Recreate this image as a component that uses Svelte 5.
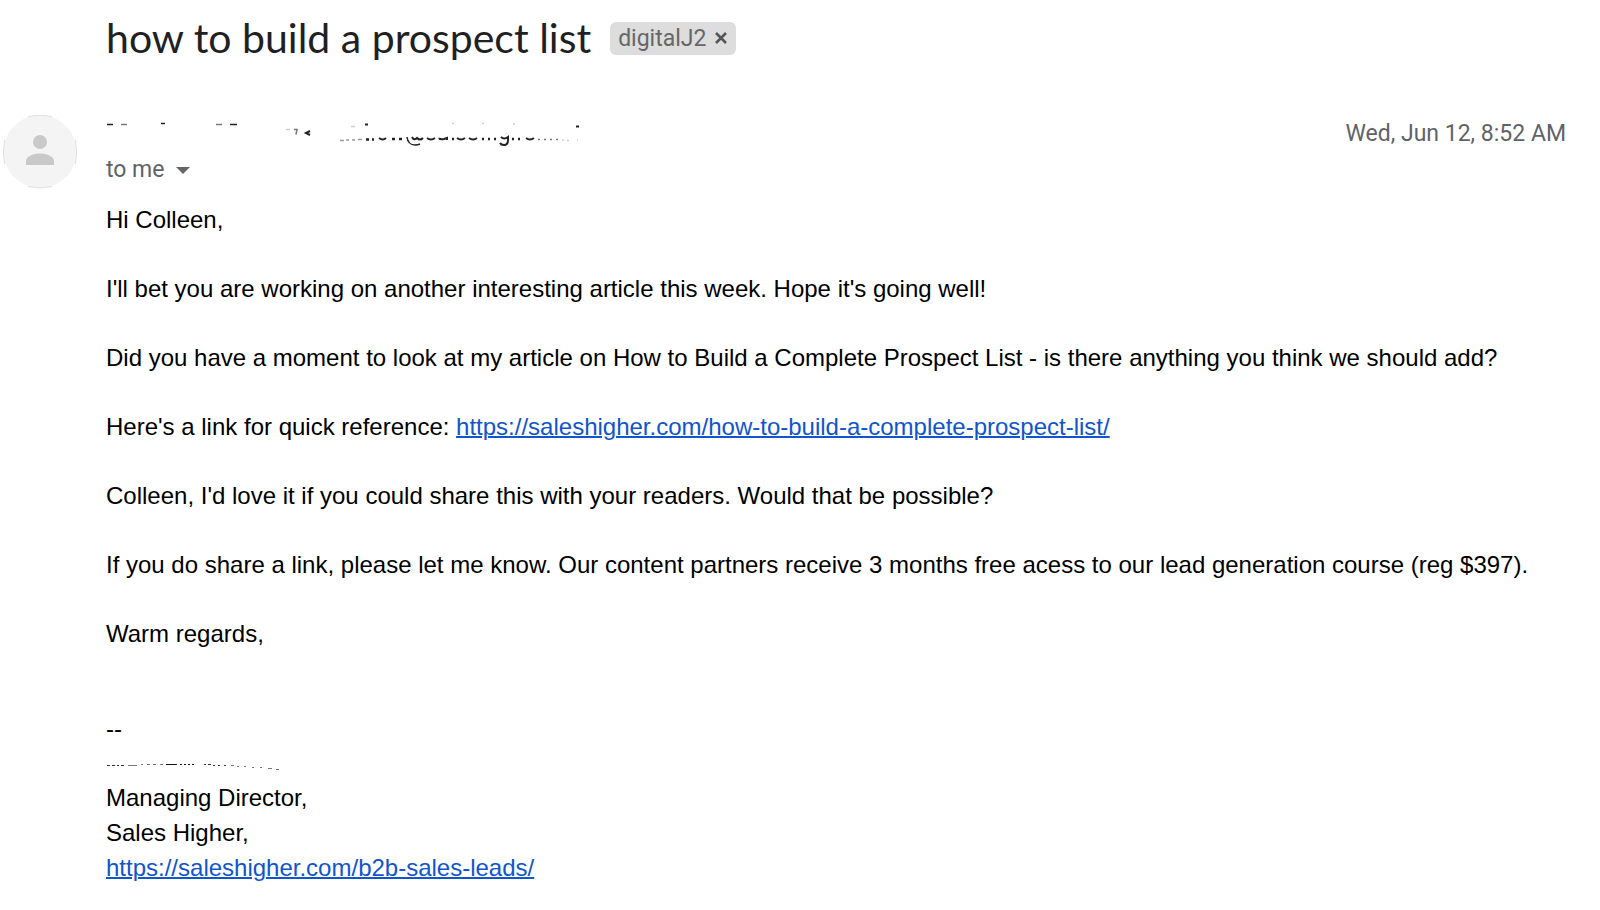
<script lang="ts">
  const articleUrl = 'https://saleshigher.com/how-to-build-a-complete-prospect-list/';
  const leadsUrl = 'https://saleshigher.com/b2b-sales-leads/';

  let labels = $state(['digitalJ2']);

  function removeLabel(name: string) {
    labels = labels.filter((label) => label !== name);
  }
</script>

<main class="thread">
  <header class="subject">
    <h1>how to build a prospect list</h1>
    {#each labels as label (label)}
      <span class="label">
        {label}
        <button type="button" aria-label="Remove label {label}" onclick={() => removeLabel(label)}>
          <svg viewBox="0 0 14 14" width="14" height="14" aria-hidden="true">
            <path d="M2 2L12 12M12 2L2 12" stroke="#555" stroke-width="2.600" />
          </svg>
        </button>
      </span>
    {/each}
  </header>

  <article class="message">
    <svg class="avatar" viewBox="0 0 74 74" width="74" height="74" aria-hidden="true">
      <circle cx="37" cy="36.500" r="36.500" fill="#f4f4f4" />
      <path
        d="M25 1.500Q37 -1.500 49 1.500M25 71.500Q37 74.500 49 71.500M1.500 25Q-.5 37 1.500 49M72.500 25Q74.500 37 72.500 49"
        fill="none"
        stroke="#e0e0e0"
      />
      <circle cx="37" cy="27" r="7" fill="#c9c9c9" />
      <path d="M23 50V46C23 41 31 38.500 37 38.500S51 41 51 46V50Z" fill="#c9c9c9" />
    </svg>

    <div class="content">
      <div class="meta">
        <!-- what is left of the rubbed-out sender -->
        <svg class="sender" viewBox="0 0 480 26" width="480" height="26" aria-hidden="true">
          <g fill="none" stroke="#222" stroke-width="1.500">
            <path d="M1 4.500h6M55 3.500h4M124 4.500h7" />
            <path d="M15 4.500h6M110 4.500h6" stroke="#777" />
            <path d="M180 9.500h4M245 6.500h4M346 3.500h2M376 3.500h2M407 4h2" stroke="#ccc" />
            <path d="M188 9.500h3l-1 5" stroke="#777" />
            <path d="M204 11l-4 2l4 2" stroke-width="2" />
            <path d="M259 4.500h3M470 6.500h3" stroke-width="2" />
            <path d="M234 20.500h4M240 20h3M246 20h3M252 19.500h4" stroke="#999" />
            <path d="M260 19.500h3M266 19.500h2M286 19h3M293 19h3M346 19h2M376 19h2M382 19h2M388 19h2M406 19h2M412 19h2" stroke-width="2.500" />
            <path d="M273 18q4 3 7 0M306 17q2 4 5 1q3 3 6 0M321 18q4 3 8 0M333 18q1 2 5 1l3-1v2M351 18q4 3 8 0M363 18q4 3 8 0M420 18q4 3 8 0" stroke-width="2" />
            <path d="M301 17q1 8 8 8q3 0 5-1" stroke-width="1.500" />
            <path d="M395 17q3 3 7 0v3q0 5-4 5q-3 0-4-2" stroke-width="2" />
            <path d="M432 19.500h2M438 19.500h2M444 19.500h2M450 19.500h2" stroke="#777" />
            <path d="M456 20h2M461 20.500h2M471 20.500h1" stroke="#ccc" />
          </g>
        </svg>
        <time datetime="06-12T08:52">Wed, Jun 12, 8:52 AM</time>
      </div>

      <button type="button" class="recipient">
        to me
        <svg viewBox="0 0 14 7" width="14" height="7" aria-hidden="true">
          <path d="M0 0H14L7 7Z" fill="#666" />
        </svg>
      </button>

      <div class="body">
        <p>Hi Colleen,</p>
        <p>I'll bet you are working on another interesting article this week. Hope it's going well!</p>
        <p>
          Did you have a moment to look at my article on How to Build a Complete Prospect List - is there
          anything you think we should add?
        </p>
        <p>Here's a link for quick reference: <a href={articleUrl}>{articleUrl}</a></p>
        <p>Colleen, I'd love it if you could share this with your readers. Would that be possible?</p>
        <p>
          If you do share a link, please let me know. Our content partners receive 3 months free acess to
          our lead generation course (reg $397).
        </p>
        <p>Warm regards,</p>
      </div>

      <footer class="signature">
        <div>--</div>
        <!-- lower edge of the rubbed-out name -->
        <svg class="signer" viewBox="0 0 174 34" width="174" height="34" aria-hidden="true">
          <g fill="none" stroke="#333" stroke-width="1.200">
            <path d="M1 19.500h3M6 19.500h3M11 19.500h2M15 19.500h3" stroke-width="1" />
            <path d="M22 19.500h9M35 18.500h2M41 18.500h3M47 18.500h3M54 18.500h3" stroke="#777" />
            <path d="M60 18.500h11M74 18.500h2M78 18.500h2M82 18.500h2M86 18.500h2" stroke="#111" />
            <path d="M98 18.500h2M102 18.500h3M107 19.500h2M112 19.500h2M118 19.500h2" />
            <path d="M125 19.500h3M131 20.500h2M138 20.500h2M146 21.500h2M154 21.500h2M162 22.500h4M170 23.500h3" stroke="#777" />
          </g>
        </svg>
        <div>Managing Director,</div>
        <div>Sales Higher,</div>
        <a href={leadsUrl}>{leadsUrl}</a>
      </footer>
    </div>
  </article>
</main>

<style>
  :global(body) {
    margin: 0;
    background: #fff;
  }

  .thread {
    padding: 12px 34px 12px 3px;
    color: #000;
    font-family: 'Liberation Sans', Arial, sans-serif;
    font-size: 24px;
    line-height: 35px;
  }

  .subject {
    display: flex;
    align-items: center;
    gap: 19px;
    padding-left: 103px;
  }

  h1 {
    margin: 0;
    color: #1f1f24;
    font-family: Lato, sans-serif;
    font-size: 41px;
    font-weight: 400;
    line-height: 52px;
  }

  .label {
    display: flex;
    align-items: center;
    gap: 8px;
    padding: 0 8px;
    border-radius: 6px;
    background: #ddd;
    color: #666;
    font-family: Roboto, sans-serif;
    font-size: 23px;
    line-height: 33px;
  }

  button {
    padding: 0;
    border: 0;
    background: none;
    color: inherit;
    font: inherit;
    cursor: pointer;
  }

  .label button {
    display: flex;
  }

  .message {
    display: flex;
    gap: 29px;
    margin-top: 51px;
  }

  .avatar {
    flex: none;
  }

  .content {
    flex: 1;
    min-width: 0;
  }

  .meta {
    display: flex;
    justify-content: space-between;
    margin-top: 5px;
    color: #5f6368;
    font-family: Roboto, sans-serif;
    font-size: 23px;
    line-height: 28px;
  }

  .recipient {
    display: flex;
    align-items: center;
    gap: 11px;
    margin-top: 8px;
    color: #5f6368;
    font-family: Roboto, sans-serif;
    font-size: 23px;
    line-height: 28px;
  }

  .body {
    margin-top: 18px;
  }

  p {
    margin: 0 0 34px;
  }

  a {
    color: #15c;
    text-decoration-thickness: 2px;
  }

  .signature {
    margin-top: 60px;
  }

  .signer {
    display: block;
  }
</style>
